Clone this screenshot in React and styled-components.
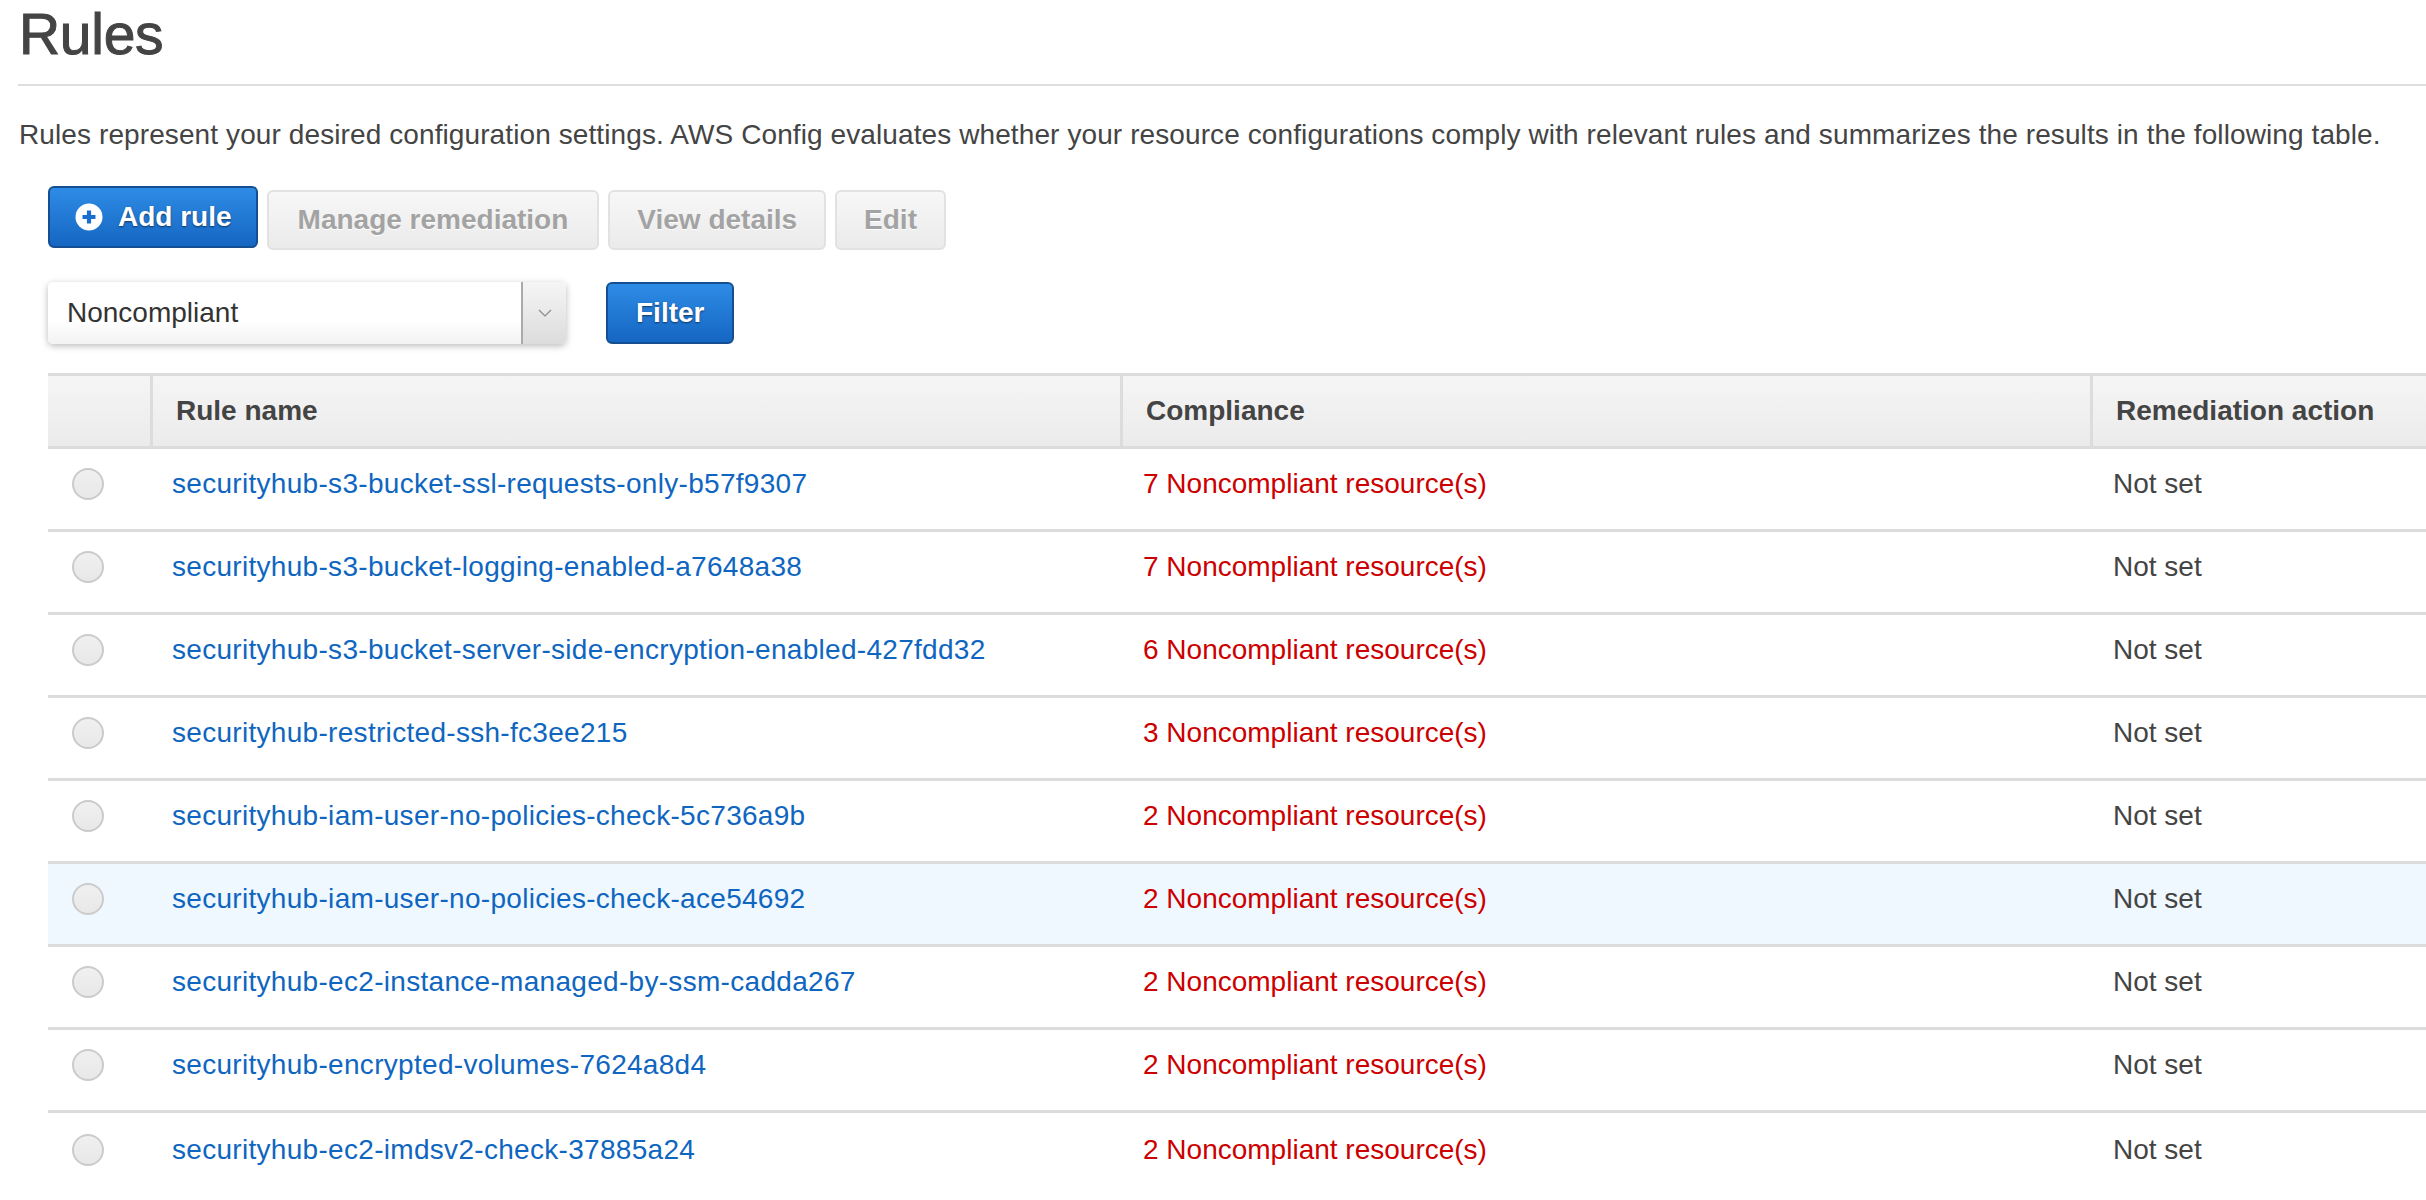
import React from 'react'
import styled, { createGlobalStyle } from 'styled-components'

const GlobalStyle = createGlobalStyle`
  html, body {
    margin: 0;
    padding: 0;
    overflow: hidden;
    background: #fff;
  }
  body {
    font-family: "Liberation Sans", Arial, Helvetica, sans-serif;
    color: #444;
  }
`

const Page = styled.div`
  padding: 0 0 0 18px;
`

const TitleBar = styled.div`
  padding: 3px 0 19px 1px;
  border-bottom: 2px solid #dedede;
`

const Title = styled.h1`
  margin: 0;
  font-size: 57px;
  line-height: 62px;
  font-weight: 400;
  color: #444;
  letter-spacing: -0.3px;
  -webkit-text-stroke: 1px #444;
`

const Intro = styled.p`
  margin: 29px 0 0 1px;
  font-size: 28px;
  line-height: 40px;
  color: #444;
  letter-spacing: 0.1px;
  white-space: nowrap;
`

const Content = styled.div`
  padding-left: 30px;
`

const Toolbar = styled.div`
  display: flex;
  align-items: flex-start;
  gap: 9px;
  margin-top: 31px;
`

const BaseButton = styled.button`
  font-family: "Liberation Sans", Arial, Helvetica, sans-serif;
  font-size: 28px;
  font-weight: 700;
  display: inline-flex;
  align-items: center;
  box-sizing: border-box;
  border-radius: 6px;
  cursor: pointer;
`

const PrimaryButton = styled(BaseButton)`
  height: 62px;
  padding: 0 ${p => p.$pr}px 0 ${p => p.$pl}px;
  gap: 15px;
  color: #fff;
  text-shadow: 0 1px 2px rgba(0, 0, 0, 0.55);
  background: linear-gradient(#2e8ce6, #1566c2);
  border: 2px solid #154f92;
`

const GreyButton = styled(BaseButton)`
  height: 60px;
  margin-top: 4px;
  padding: 0 ${p => p.$px}px;
  color: #a3a3a3;
  text-shadow: 0 1px 0 #fff;
  background: linear-gradient(#f7f7f7, #ebebeb);
  border: 2px solid #e2e2e2;
`

const FilterRow = styled.div`
  display: flex;
  align-items: center;
  gap: 40px;
  margin-top: 32px;
`

const Select = styled.div`
  width: 518px;
  height: 62px;
  box-sizing: border-box;
  display: flex;
  border-radius: 5px;
  background: linear-gradient(#fff 60%, #f3f3f3);
  box-shadow: 0 2px 7px rgba(0, 0, 0, 0.28);
`

const SelectValue = styled.div`
  flex: 1;
  display: flex;
  align-items: center;
  padding-left: 19px;
  font-size: 28px;
  color: #333;
`

const SelectArrow = styled.div`
  width: 43px;
  display: flex;
  align-items: center;
  justify-content: center;
  border-left: 2px solid #aaa;
  border-radius: 0 5px 5px 0;
  background: linear-gradient(#f5f5f5, #dcdcdc);
`

const Table = styled.div`
  margin-top: 29px;
  width: 2700px;
`

const Cols = `
  display: grid;
  grid-template-columns: 102px 970px 970px 1fr;
`

const HeadRow = styled.div`
  ${Cols}
  height: 76px;
  box-sizing: border-box;
  border-top: 3px solid #dcdcdc;
  border-bottom: 3px solid #dcdcdc;
  background: linear-gradient(#f5f5f5, #ebebeb);
`

const HeadCell = styled.div`
  display: flex;
  align-items: center;
  padding-left: 23px;
  font-size: 28px;
  font-weight: 700;
  color: #444;
  border-left: ${p => (p.$first ? 'none' : '3px solid #dcdcdc')};
`

const Row = styled.div`
  ${Cols}
  height: 83px;
  box-sizing: border-box;
  border-bottom: 3px solid #dcdcdc;
  background: ${p => (p.$hover ? '#f0f8ff' : '#fff')};
  &:last-child {
    border-bottom: none;
  }
`

const Cell = styled.div`
  display: flex;
  align-items: center;
  padding: 0 0 10px 23px;
  font-size: 28px;
  white-space: nowrap;
  color: ${p => p.$color || '#444'};
`

const RadioCell = styled.div`
  display: flex;
  align-items: center;
  padding: 0 0 10px 24px;
`

const Radio = styled.span`
  width: 32px;
  height: 32px;
  box-sizing: border-box;
  border-radius: 50%;
  border: 2px solid #cbcbcb;
  background: linear-gradient(#f0f0f0, #e8e8e8);
`

const RuleLink = styled.a`
  color: #0f66c0;
  text-decoration: none;
  margin-left: -1px;
  letter-spacing: 0.3px;
`

const PlusIcon = () => (
  <svg width="28" height="28" viewBox="0 0 28 28">
    <circle cx="14" cy="14" r="13.5" fill="#fff" />
    <path d="M14 7.5v13M7.5 14h13" stroke="#1a6fce" strokeWidth="4.2" />
  </svg>
)

const Chevron = () => (
  <svg width="14" height="8" viewBox="0 0 14 8">
    <path d="M1 1l6 6 6-6" fill="none" stroke="#8a8a8a" strokeWidth="1.2" />
  </svg>
)

const rules = [
  ['securityhub-s3-bucket-ssl-requests-only-b57f9307', 7],
  ['securityhub-s3-bucket-logging-enabled-a7648a38', 7],
  ['securityhub-s3-bucket-server-side-encryption-enabled-427fdd32', 6],
  ['securityhub-restricted-ssh-fc3ee215', 3],
  ['securityhub-iam-user-no-policies-check-5c736a9b', 2],
  ['securityhub-iam-user-no-policies-check-ace54692', 2],
  ['securityhub-ec2-instance-managed-by-ssm-cadda267', 2],
  ['securityhub-encrypted-volumes-7624a8d4', 2],
  ['securityhub-ec2-imdsv2-check-37885a24', 2],
]

export default function App() {
  return (
    <Page>
      <GlobalStyle />
      <TitleBar>
        <Title>Rules</Title>
      </TitleBar>
      <Intro>
        Rules represent your desired configuration settings. AWS Config evaluates whether your resource
        configurations comply with relevant rules and summarizes the results in the following table.
      </Intro>

      <Content>
        <Toolbar>
          <PrimaryButton $pl={25} $pr={24}>
            <PlusIcon />
            Add rule
          </PrimaryButton>
          <GreyButton $px={29}>Manage remediation</GreyButton>
          <GreyButton $px={27}>View details</GreyButton>
          <GreyButton $px={27}>Edit</GreyButton>
        </Toolbar>

        <FilterRow>
          <Select>
            <SelectValue>Noncompliant</SelectValue>
            <SelectArrow>
              <Chevron />
            </SelectArrow>
          </Select>
          <PrimaryButton $pl={28} $pr={28}>Filter</PrimaryButton>
        </FilterRow>

        <Table>
          <HeadRow>
            <HeadCell $first />
            <HeadCell>Rule name</HeadCell>
            <HeadCell>Compliance</HeadCell>
            <HeadCell>Remediation action</HeadCell>
          </HeadRow>
          {rules.map(([name, count], i) => (
            <Row key={name} $hover={i === 5}>
              <RadioCell>
                <Radio />
              </RadioCell>
              <Cell>
                <RuleLink href="#">{name}</RuleLink>
              </Cell>
              <Cell $color="#cc0000">{count} Noncompliant resource(s)</Cell>
              <Cell>Not set</Cell>
            </Row>
          ))}
        </Table>
      </Content>
    </Page>
  )
}
